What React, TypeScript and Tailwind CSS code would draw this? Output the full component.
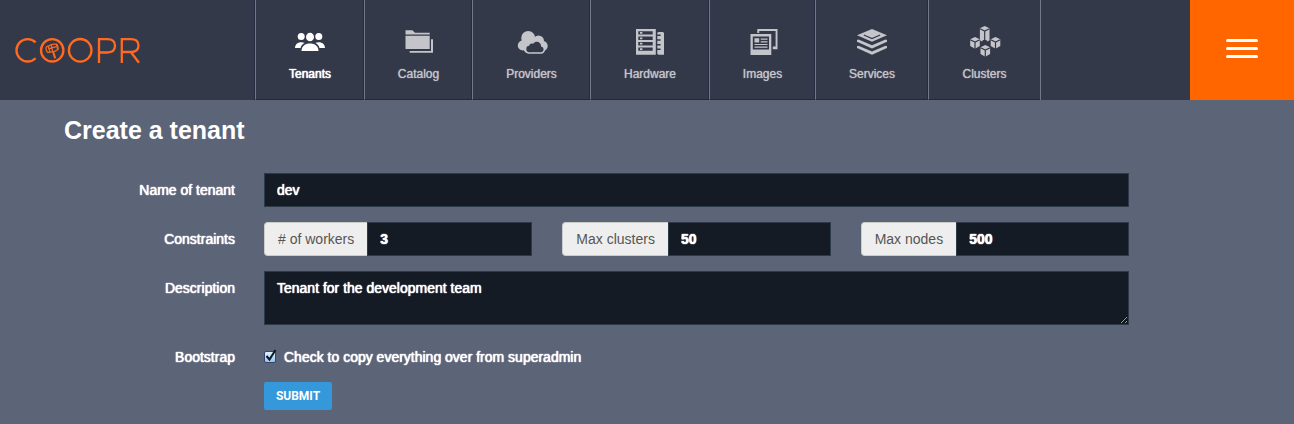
import React from 'react';

const dark = '#343949';
const line = { fill: 'none', stroke: dark };

function Logo() {
  return (
    <svg viewBox="0 0 126 28" className="h-7 w-[126px]" fill="none" stroke="#ff6a20" strokeWidth="2.3" aria-label="Coopr" role="img">
      <path d="M20.6 6.400A11.200 11.200 0 1 0 20.600 22.200" />
      <circle cx="37.200" cy="14.300" r="11.200" />
      <circle cx="65.200" cy="14.300" r="11.300" />
      <path d="M84 27V3.200h8.200c4.900 0 7.800 2.500 7.800 6.600s-2.900 6.700-7.800 6.700H84" />
      <path d="M106.800 27V3.200h9c4.900 0 7.700 2.300 7.700 6.300s-2.800 6.500-7.700 6.500h-9M115.800 16l8.200 10.800" />
      <g strokeWidth="1.2">
        <path d="M33.300 10.200c2.500-1.800 5-2.400 8-2l1.400 5.400c-2 1.900-4.600 2.600-7.700 2.600z" />
        <path d="M33.300 10.200c-2.600.3-2.600 1.700-2 3.800.6 2 1.400 3 3.700 2.200M41.300 8.200c1.500.2 2.500 5 1.400 5.400M36.200 9l1.600 6.800M33.500 12.600l8-2" />
        <path strokeWidth="2" d="M38.200 16l2 6.400" />
      </g>
    </svg>
  );
}

const icons = {
  tenants: (
    <>
      <circle cx="7.2" cy="10.5" r="3.500" />
      <circle cx="24.800" cy="10.500" r="3.500" />
      <path d="M1 22c.2-3.600 2.700-5.700 6.200-5.700 1.500 0 2.600.3 3.500.8-2.200 1-3.600 2.600-4.200 4.900zM31 22c-.2-3.600-2.700-5.700-6.200-5.700-1.500 0-2.600.3-3.500.8 2.200 1 3.600 2.600 4.200 4.900z" />
      <ellipse cx="16" cy="11" rx="4" ry="4.300" />
      <path d="M7.500 25c0-5 3.700-7.500 8.500-7.500s8.500 2.500 8.500 7.500z" />
    </>
  ),
  catalog: (
    <path d="M2.500 4.300h6.800l2.700 2.500h14.700v1.700H2.500zM2.500 9.700h24.200V23H2.500zM28 13.300h2v13.400H6.700V25H28z" />
  ),
  providers: (
    <>
      <circle cx="12.200" cy="12" r="7" />
      <circle cx="6.800" cy="19.500" r="5" />
      <circle cx="22.500" cy="15" r="5.500" />
      <circle cx="26.800" cy="20" r="4.900" />
      <path d="M6.500 15h20v12.500H13c-2.500 0-4-1-5-3z" />
      <rect x="8.800" y="19" width="20.500" height="8.500" rx="4.200" />
      <g fill={dark}>
        <circle cx="13.500" cy="23" r="3.200" />
        <circle cx="16" cy="20.200" r="2.800" />
        <circle cx="20.800" cy="20" r="4.200" />
        <circle cx="24.600" cy="23.300" r="2.900" />
        <path d="M13.500 20h11v6.200h-11z" />
      </g>
    </>
  ),
  hardware: (
    <>
      <path d="M2 3h19.800v25.700H2zM24.500 6H29l1 1v21.700h-5.500l-1.200-1V6.800z" />
      <path
        fill={dark}
        d="M4.300 5.200h14.400v3.400H4.300zM4.300 10.600h14.400V14H4.300zM4.300 16h14.400v3.400H4.300zM4.300 21.400h14.400v3.400H4.300zM23 8.600h3.600v1.500H23zM23 13.200h3.600v1.500H23zM23 17.900h3.600v1.500H23zM23 22.600h3.600v1.500H23z"
      />
      <path d="M6 6h2.400v1.800H6zM6 11.400h2.400v1.800H6zM6 16.800h2.400v1.800H6zM6 22.200h2.400V24H6z" />
    </>
  ),
  images: (
    <>
      <path d="M10.300 3H30.500v20.200h-4.700v-2.700h2.800V4.900H12.200v2H10.300z" />
      <path d="M3.500 8h20.800v21H3.500z" />
      <path fill={dark} d="M5.800 10.500H22v13H5.800z" />
      <path d="M7.500 12.200h4.700v4.300H7.500zM13.700 12.400h6.800v1.300h-6.800zM13.700 15.200h6.800v1.300h-6.800zM7.500 17.900h13v1.200h-13zM7.500 20.600h13v1.200h-13z" />
    </>
  ),
  services: (
    <>
      <path d="M16 3l15 6.200-15 6.600L1 9.200zM1 14l1.500-.6L16 19.200l13.500-5.800 1.500.6v1.800l-15 6.600-15-6.600zM1 20.300l1.500-.6L16 25.500l13.500-5.800 1.500.6v1.800l-15 6.600-15-6.600z" />
      <path {...line} strokeWidth="1.200" d="M7.800 9l8.200 3.500L24.200 9" />
    </>
  ),
  clusters: (
    <>
      <path d="M15.700 0l4.800 2.300v12l-2 1.200-1.300-1.500h-3l-1.300 1.500-2-1.200v-12zM6 11l4.800 2.300v6.800L6 22.800l-4.800-2.700v-6.800zM26.500 11l4.800 2.300v6.800l-4.800 2.700-4.800-2.700v-6.800zM16.300 19l4.800 2.300v6.800l-4.800 2.700-4.800-2.700v-6.800z" />
      <path
        {...line}
        strokeWidth="1.200"
        d="M10.900 2.800l4.800 2.200 4.800-2.200M15.700 5v10M1.200 13.800L6 16l4.800-2.200M6 16v7M21.700 13.800l4.800 2.200 4.800-2.200M26.500 16v7M11.500 21.800l4.800 2.200 4.800-2.200M16.300 24v7"
      />
    </>
  ),
};

const nav: { label: string; icon: keyof typeof icons; width: string; active?: boolean }[] = [
  { label: 'Tenants', icon: 'tenants', width: 'w-[109px]', active: true },
  { label: 'Catalog', icon: 'catalog', width: 'w-[108px]' },
  { label: 'Providers', icon: 'providers', width: 'w-[118px]' },
  { label: 'Hardware', icon: 'hardware', width: 'w-[119px]' },
  { label: 'Images', icon: 'images', width: 'w-[106px]' },
  { label: 'Services', icon: 'services', width: 'w-[113px]' },
  { label: 'Clusters', icon: 'clusters', width: 'w-[112px]' },
];

const field =
  'rounded-none border border-[#2c3a4a] bg-[#141b24] px-3 text-sm text-white outline-none [text-shadow:0_0_1px_#fff,0_0_1px_#fff]';
const labelStyle = 'w-[235px] shrink-0 pt-[7px] text-right text-sm [text-shadow:0_0_1px_#fff,0_0_1px_#fff]';

function Constraint({ id, label, value }: { id: string; label: string; value: string }) {
  return (
    <div className="flex h-[34px] min-w-0 flex-1">
      <label
        htmlFor={id}
        className="flex shrink-0 items-center rounded-l border border-r-0 border-[#ccc] bg-[#eee] px-[13px] text-sm text-[#555]"
      >
        {label}
      </label>
      <input id={id} defaultValue={value} className={`${field} min-w-0 flex-1 font-bold`} />
    </div>
  );
}

export default function App() {
  return (
    <div className="min-h-screen bg-[#5c6478] font-['Liberation_Sans',sans-serif] text-white">
      <header className="flex h-[100px] items-stretch bg-[#343949]">
        <a href="#home" className="flex w-[255px] shrink-0 items-center pl-[15px]">
          <Logo />
        </a>
        <nav className="flex border-r border-[#747885]">
          {nav.map((item) => (
            <a
              key={item.label}
              href={`#${item.icon}`}
              className={`${item.width} flex flex-col items-center gap-2 border-b border-l border-b-[#1f2a42] border-l-[#747885] pt-[26px] text-xs shadow-[-1px_0_0_#242c42] ${item.active ? 'text-white [text-shadow:0_0_1px_#fff,0_0_1px_#fff]' : 'text-[#c4c5ca] [text-shadow:0_0_1px_#c4c5ca]'}`}
            >
              <svg viewBox="0 0 32 32" className="size-8" fill="currentColor" aria-hidden="true">
                {icons[item.icon]}
              </svg>
              {item.label}
            </a>
          ))}
        </nav>
        <button aria-label="Menu" className="ml-auto flex w-[104px] flex-col items-center justify-center gap-[5px] bg-[#ff6600] pb-1">
          <span className="h-[3px] w-8 rounded-full bg-white" />
          <span className="h-[3px] w-8 rounded-full bg-white" />
          <span className="h-[3px] w-8 rounded-full bg-white" />
        </button>
      </header>

      <main className="pr-[165px] pb-3">
        <h1 className="pt-[15px] pl-16 text-[25px] leading-[30px] font-bold">Create a tenant</h1>
        <form className="mt-7 flex flex-col gap-[15px]" onSubmit={(e) => e.preventDefault()}>
          <div className="flex gap-[29px]">
            <label htmlFor="name" className={labelStyle}>Name of tenant</label>
            <input id="name" defaultValue="dev" className={`${field} h-[34px] min-w-0 flex-1`} />
          </div>
          <div className="flex gap-[29px]">
            <span className={labelStyle}>Constraints</span>
            <div className="flex min-w-0 flex-1 gap-[30px]">
              <Constraint id="workers" label="# of workers" value="3" />
              <Constraint id="max-clusters" label="Max clusters" value="50" />
              <Constraint id="max-nodes" label="Max nodes" value="500" />
            </div>
          </div>
          <div className="flex gap-[29px]">
            <label htmlFor="description" className={labelStyle}>Description</label>
            <textarea
              id="description"
              defaultValue="Tenant for the development team"
              className={`${field} h-[54px] min-w-0 flex-1 resize py-1.5`}
            />
          </div>
          <div className="flex gap-[29px]">
            <label htmlFor="bootstrap" className={labelStyle}>Bootstrap</label>
            <label className="flex items-center gap-2 pt-[7px] text-sm [text-shadow:0_0_1px_#fff,0_0_1px_#fff]">
              <span className="relative flex">
                <input
                  id="bootstrap"
                  type="checkbox"
                  defaultChecked
                  className="peer size-3 appearance-none rounded-xs border border-[#39456b] bg-linear-to-b from-[#e4f1fc] to-[#8fc5ef]"
                />
                <svg
                  viewBox="0 0 14 14"
                  className="pointer-events-none absolute -top-0.5 left-0 hidden size-3.5 peer-checked:block"
                  fill="none"
                  stroke="#0b1524"
                  strokeWidth="2"
                >
                  <path d="M2.500 7l3 3.500L11.500 1" />
                </svg>
              </span>
              Check to copy everything over from superadmin
            </label>
          </div>
          <button
            type="submit"
            className="ml-[264px] h-7 w-[68px] rounded-xs bg-[#3498db] font-['Liberation_Sans_Narrow','Roboto',sans-serif] text-xs font-bold"
          >
            SUBMIT
          </button>
        </form>
      </main>
    </div>
  );
}
